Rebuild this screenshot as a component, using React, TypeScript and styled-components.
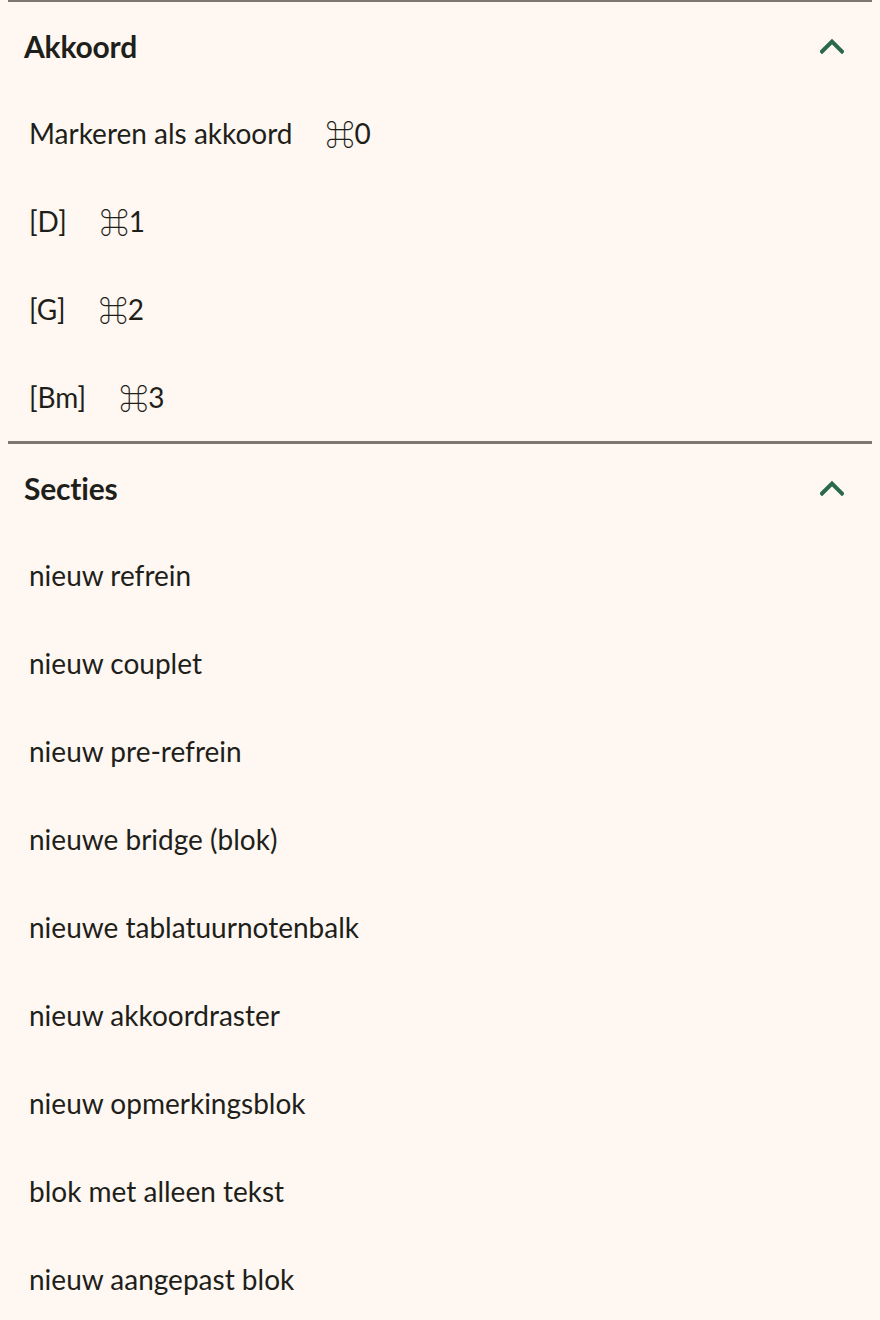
import React from "react";
import styled, { createGlobalStyle } from "styled-components";

const Global = createGlobalStyle`
  html, body {
    margin: 0;
    padding: 0;
    background: #fff7f1;
  }
  body {
    padding: 0 8px;
    font-family: "Lato", "Open Sans", sans-serif;
    color: #1e1f1b;
  }
`;

const Panel = styled.div`
  width: 864px;
  display: flex;
  flex-direction: column;
`;

const Section = styled.section<{ $first?: boolean }>`
  border-top: ${(p) => (p.$first ? "2px" : "3px")} solid #7d7770;
  display: flex;
  flex-direction: column;
`;

const Header = styled.div`
  height: 87px;
  display: flex;
  align-items: center;
  justify-content: space-between;
  padding: 0 28px 0 16px;
`;

const Title = styled.h2`
  margin: 0;
  font-size: 30px;
  font-weight: 700;
  letter-spacing: -0.2px;
  color: #1e1f1b;
`;

const Toggle = styled.button`
  border: 0;
  background: none;
  padding: 0;
  width: 24px;
  height: 16px;
  display: flex;
  align-items: center;
  justify-content: center;
  cursor: pointer;
`;

const Item = styled.div`
  height: 88px;
  display: flex;
  align-items: center;
  padding-left: 21px;
  font-size: 28px;
  color: #1e1f1b;
`;

const Shortcut = styled.span`
  margin-left: 33px;
  display: inline-flex;
  align-items: center;
`;

const Cmd = styled.span`
  font-family: "Noto Sans CJK JP", "DejaVu Sans", sans-serif;
  font-weight: 500;
  font-size: 29px;
  line-height: 1;
`;

const Chevron = () => (
  <svg width="24" height="16" viewBox="0 0 24 16">
    <polyline
      points="2,13.5 12,3.5 22,13.5"
      fill="none"
      stroke="#2a6a4a"
      strokeWidth="4"
      strokeLinecap="square"
    />
  </svg>
);

type Entry = { label: string; key?: string };

const chords: Entry[] = [
  { label: "Markeren als akkoord", key: "0" },
  { label: "[D]", key: "1" },
  { label: "[G]", key: "2" },
  { label: "[Bm]", key: "3" },
];

const sections: Entry[] = [
  { label: "nieuw refrein" },
  { label: "nieuw couplet" },
  { label: "nieuw pre-refrein" },
  { label: "nieuwe bridge (blok)" },
  { label: "nieuwe tablatuurnotenbalk" },
  { label: "nieuw akkoordraster" },
  { label: "nieuw opmerkingsblok" },
  { label: "blok met alleen tekst" },
  { label: "nieuw aangepast blok" },
];

const Group = ({ title, items, first }: { title: string; items: Entry[]; first?: boolean }) => (
  <Section $first={first}>
    <Header>
      <Title>{title}</Title>
      <Toggle aria-label="inklappen">
        <Chevron />
      </Toggle>
    </Header>
    {items.map((it) => (
      <Item key={it.label}>
        {it.label}
        {it.key && (
          <Shortcut>
            <Cmd>⌘</Cmd>
            {it.key}
          </Shortcut>
        )}
      </Item>
    ))}
  </Section>
);

export default function App() {
  return (
    <>
      <Global />
      <Panel>
        <Group title="Akkoord" items={chords} first />
        <Group title="Secties" items={sections} />
      </Panel>
    </>
  );
}
